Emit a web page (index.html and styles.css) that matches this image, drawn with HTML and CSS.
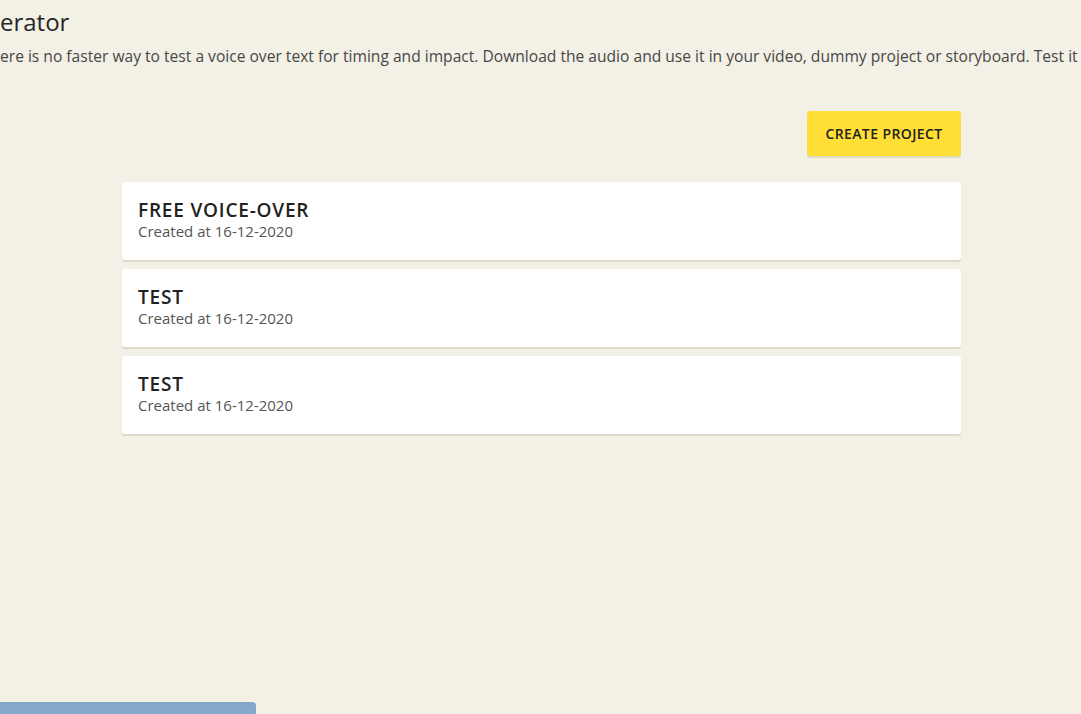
FILE: index.html
```html
<!DOCTYPE html>
<html lang="en">
<head>
<meta charset="utf-8">
<title>Voice-over generator</title>
<link rel="stylesheet" href="styles.css">
</head>
<body>
<div class="page">
  <header class="intro">
    <h1 class="title"><span class="cut">Free voice-over gen</span>erator</h1>
    <p class="lead"><span class="cut">Th</span>ere is no faster way to test a voice over text for timing and impact. Download the audio and use it in your video, dummy project or storyboard. Test it now for free.</p>
  </header>
  <main class="projects">
    <div class="toolbar">
      <button class="btn-create">CREATE PROJECT</button>
    </div>
    <ul class="list">
      <li class="card">
        <div class="card-title">FREE VOICE-OVER</div>
        <div class="card-date">Created at 16-12-2020</div>
      </li>
      <li class="card">
        <div class="card-title">TEST</div>
        <div class="card-date">Created at 16-12-2020</div>
      </li>
      <li class="card">
        <div class="card-title">TEST</div>
        <div class="card-date">Created at 16-12-2020</div>
      </li>
    </ul>
  </main>
  <div class="footer-bar"></div>
</div>
</body>
</html>
```
FILE: styles.css
```css
html, body {
  margin: 0;
  padding: 0;
  height: 100%;
  overflow: hidden;
}
body {
  background: #f3f0e6;
  font-family: "Open Sans", "Lato", sans-serif;
  color: #2a2a2a;
}
.page {
  height: 714px;
  display: flex;
  flex-direction: column;
}
.intro {
  padding-top: 8px;
}
.title {
  position: relative;
  margin: 0;
  font-size: 24px;
  font-weight: 400;
  line-height: 28px;
  color: #262626;
  white-space: nowrap;
}
.cut {
  position: absolute;
  right: 100%;
  top: 0;
}
.lead {
  position: relative;
  margin: 10px 0 0;
  font-size: 15.6px;
  line-height: 20px;
  color: #474747;
  white-space: nowrap;
}
.projects {
  width: 839px;
  margin-left: 122px;
  margin-top: 45px;
}
.toolbar {
  display: flex;
  justify-content: flex-end;
}
.btn-create {
  width: 154px;
  height: 45px;
  border: none;
  border-radius: 4px;
  background: #ffde36;
  box-shadow: 0 2px 0 rgba(180, 160, 60, 0.25);
  font-family: inherit;
  font-weight: 600;
  font-size: 14px;
  letter-spacing: 0.4px;
  color: #222;
}
.list {
  list-style: none;
  margin: 26px 0 0;
  padding: 0;
  display: flex;
  flex-direction: column;
  gap: 9px;
}
.card {
  height: 78px;
  box-sizing: border-box;
  padding: 16px 16px 0;
  background: #fff;
  border-radius: 3px;
  box-shadow: 0 2px 1px rgba(150, 135, 100, 0.22);
}
.card-title {
  font-size: 19px;
  font-weight: 600;
  letter-spacing: 0.8px;
  line-height: 24px;
  color: #222;
}
.card-date {
  font-size: 15px;
  line-height: 18px;
  color: #555;
}
.footer-bar {
  margin-top: auto;
  width: 256px;
  height: 12px;
  background: #85a7c8;
  border-top-right-radius: 4px;
}
```
